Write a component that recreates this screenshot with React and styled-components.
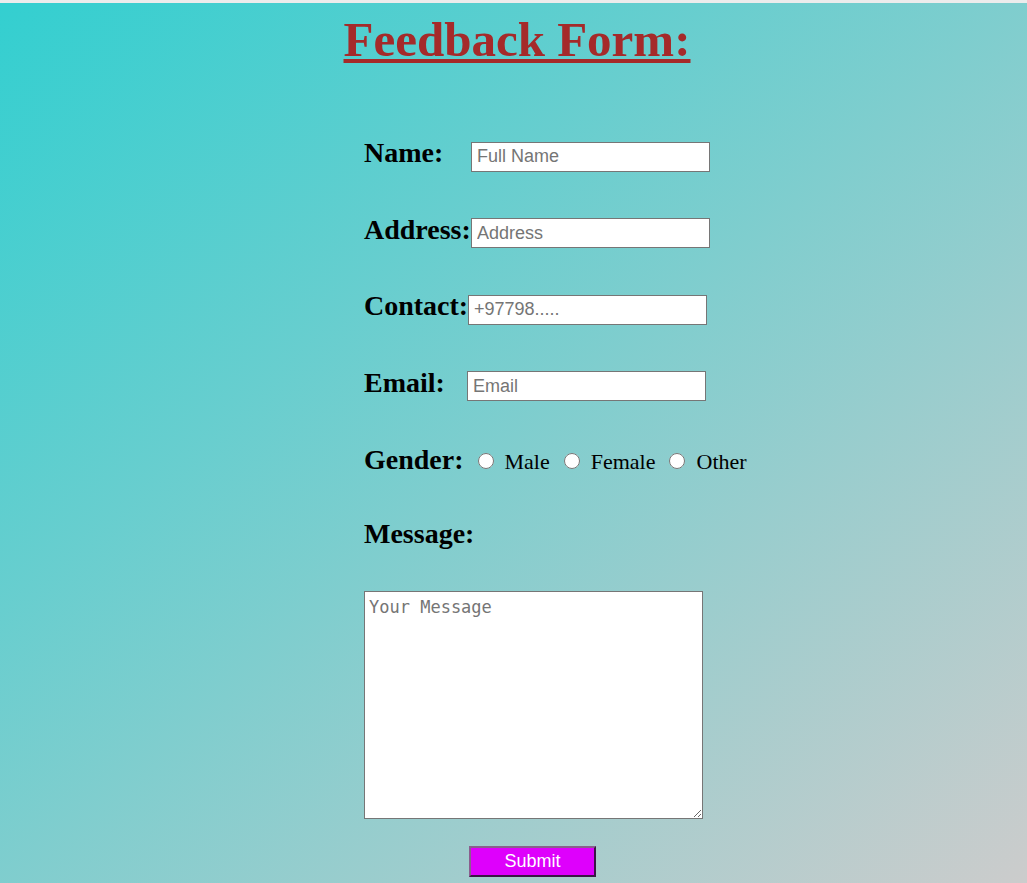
import React from "react";
import styled, { createGlobalStyle } from "styled-components";

const Global = createGlobalStyle`
  html, body { margin: 0; padding: 0; }
  body { font-family: "Liberation Serif", "Times New Roman", serif; }
`;

const Page = styled.div`
  box-sizing: border-box;
  min-height: 100vh;
  border-top: 3px solid #ececec;
  padding-top: 10px;
  background: linear-gradient(to bottom right, #33cfd0, #cccccc);
`;

const Title = styled.h1`
  margin: 0 0 71px 0;
  padding-left: 7px;
  text-align: center;
  font-family: "Liberation Serif", "Times New Roman", serif;
  font-size: 49px;
  line-height: 53px;
  font-weight: bold;
  color: #a52a2a;
  text-decoration: underline;
`;

const Form = styled.form`
  width: 339px;
  margin-left: calc(50% - 149.5px);
  display: flex;
  flex-direction: column;
  gap: 42px;
`;

const Row = styled.div`
  display: flex;
  align-items: baseline;
  margin-top: ${(p) => p.$top || 0}px;
`;

const Label = styled.label`
  flex-shrink: 0;
  width: ${(p) => (p.$w ? `${p.$w}px` : "auto")};
  font-family: "Liberation Serif", "Times New Roman", serif;
  font-size: 28px;
  line-height: 31px;
  font-weight: bold;
  color: #000;
  white-space: nowrap;
`;

const TextInput = styled.input`
  box-sizing: border-box;
  width: 239px;
  height: 30px;
  padding: 0 5px;
  margin: 0;
  border: 1px solid #767676;
  border-radius: 0;
  background: #fff;
  font-family: "Liberation Sans", Arial, sans-serif;
  font-size: 18px;
  color: #000;
  outline: none;
  &::placeholder { color: #757575; }
`;

const Radio = styled.input`
  width: 16px;
  height: 16px;
  margin: 0 ${(p) => p.$after}px 3px ${(p) => p.$before}px;
  flex-shrink: 0;
`;

const Choice = styled.span`
  font-family: "Liberation Serif", "Times New Roman", serif;
  font-size: 22px;
  color: #000;
  white-space: nowrap;
`;

const MessageBlock = styled.div`
  display: flex;
  flex-direction: column;
  gap: 27px;
`;

const TextArea = styled.textarea`
  display: block;
  box-sizing: border-box;
  width: 339px;
  height: 228px;
  margin: 0;
  padding: 5px 4px 2px;
  border: 1px solid #767676;
  border-radius: 0;
  background: #fff;
  font-family: "DejaVu Sans Mono", "Liberation Mono", monospace;
  font-size: 17px;
  outline: none;
  &::placeholder { color: #757575; }
`;

const SubmitButton = styled.button`
  align-self: center;
  box-sizing: border-box;
  width: 127px;
  height: 31px;
  margin-left: -2px;
  padding: 0;
  background: #de00fc;
  color: #fff;
  font-family: "Liberation Sans", Arial, sans-serif;
  font-size: 18px;
  border-style: solid;
  border-width: 2px;
  border-color: #8a5e8e #3a1646 #3a1646 #8a5e8e;
  cursor: pointer;
`;

export default function App() {
  return (
    <>
      <Global />
      <Page>
        <Title>Feedback Form:</Title>
        <Form onSubmit={(e) => e.preventDefault()}>
          <Row>
            <Label $w={107}>Name:</Label>
            <TextInput type="text" placeholder="Full Name" />
          </Row>
          <Row>
            <Label $w={107}>Address:</Label>
            <TextInput type="text" placeholder="Address" />
          </Row>
          <Row>
            <Label $w={104}>Contact:</Label>
            <TextInput type="text" placeholder="+97798....." />
          </Row>
          <Row>
            <Label $w={103}>Email:</Label>
            <TextInput type="email" placeholder="Email" />
          </Row>
          <Row $top={1}>
            <Label>Gender:</Label>
            <Radio type="radio" name="gender" $before={14} $after={11} />
            <Choice>Male</Choice>
            <Radio type="radio" name="gender" $before={14} $after={11} />
            <Choice>Female</Choice>
            <Radio type="radio" name="gender" $before={13} $after={12} />
            <Choice>Other</Choice>
          </Row>
          <Row $top={1}>
            <Label>Message:</Label>
          </Row>
          <MessageBlock>
            <TextArea placeholder="Your Message" />
            <SubmitButton type="submit">Submit</SubmitButton>
          </MessageBlock>
        </Form>
      </Page>
    </>
  );
}
